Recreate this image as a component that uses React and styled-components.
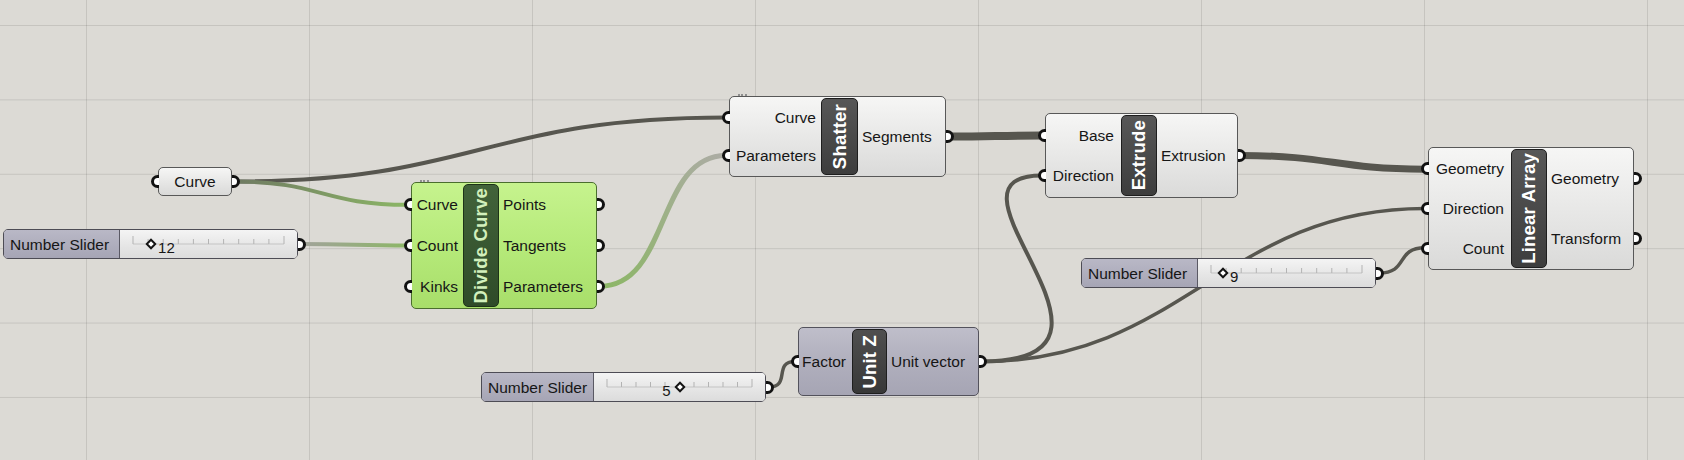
import React from "react";
import styled, { createGlobalStyle } from "styled-components";

const BORDER = 1.5;
const PAD = 1;

const GlobalStyle = createGlobalStyle`
  html, body {
    margin: 0;
    padding: 0;
    background: #dcdad5;
  }
  body {
    font-family: "Liberation Sans", Arial, sans-serif;
    overflow: hidden;
  }
`;

const tones = {
  grey: {
    fill: "linear-gradient(180deg, #f6f6f5 0%, #e8e8e7 50%, #dadad9 100%)",
    border: "#585858",
    bar: "linear-gradient(180deg, #575757 0%, #3d3d3d 100%)",
    barBorder: "#1e1e1e",
    barText: "#ffffff",
  },
  green: {
    fill: "linear-gradient(180deg, #c6f38e 0%, #b6ea7a 50%, #a8de6a 100%)",
    border: "#4a6e2e",
    bar: "linear-gradient(180deg, #42633a 0%, #2f4b29 100%)",
    barBorder: "#1d3318",
    barText: "#d2f0bc",
  },
  violet: {
    fill: "linear-gradient(180deg, #bfbeca 0%, #b0afbd 50%, #a6a5b4 100%)",
    border: "#53525c",
    bar: "linear-gradient(180deg, #4f4f4f 0%, #383838 100%)",
    barBorder: "#1e1e1e",
    barText: "#ffffff",
  },
};

const components = [
  { id: "divide", name: "Divide Curve", tone: "green", x: 411, y: 182, w: 186, h: 127, inW: 51, barW: 36, inPad: 5, inputs: ["Curve", "Count", "Kinks"], outputs: ["Points", "Tangents", "Parameters"], grip: true },
  { id: "shatter", name: "Shatter", tone: "grey", x: 729, y: 96, w: 217, h: 81, inW: 91, barW: 37, inPad: 5, inputs: ["Curve", "Parameters"], outputs: ["Segments"], grip: true },
  { id: "extrude", name: "Extrude", tone: "grey", x: 1045, y: 113, w: 193, h: 85, inW: 75, barW: 36, inPad: 7, inputs: ["Base", "Direction"], outputs: ["Extrusion"] },
  { id: "linarr", name: "Linear Array", tone: "grey", x: 1428, y: 147, w: 206, h: 123, inW: 82, barW: 36, inPad: 7, inputs: ["Geometry", "Direction", "Count"], outputs: ["Geometry", "Transform"] },
  { id: "unitz", name: "Unit Z", tone: "violet", x: 798, y: 327, w: 181, h: 69, inW: 53, barW: 35, inPad: 6, inputs: ["Factor"], outputs: ["Unit vector"] },
];

const params = [{ id: "curve", name: "Curve", x: 158, y: 167, w: 74, h: 29 }];

const sliders = [
  { id: "s12", x: 3, y: 229, w: 295, h: 30, labelW: 116, value: 12, t: 0.12, side: "right" },
  { id: "s9", x: 1081, y: 258, w: 295, h: 30, labelW: 116, value: 9, t: 0.08, side: "right" },
  { id: "s5", x: 481, y: 372, w: 285, h: 30, labelW: 112, value: 5, t: 0.5, side: "left" },
];

const byId = (id) => [...components, ...params, ...sliders].find((n) => n.id === id);

const portY = (node, i, n) =>
  node.y + BORDER + PAD + ((node.h - 2 * BORDER - 2 * PAD) * (i + 0.5)) / n;

const outPort = (id, i = 0) => {
  const node = byId(id);
  const n = node.outputs ? node.outputs.length : 1;
  return [node.x + node.w + 3, node.outputs ? portY(node, i, n) : node.y + node.h / 2];
};

const inPort = (id, i = 0) => {
  const node = byId(id);
  const n = node.inputs ? node.inputs.length : 1;
  return [node.x - 3, node.inputs ? portY(node, i, n) : node.y + node.h / 2];
};

const DARK = "#57564f";

const wires = [
  { from: outPort("curve"), to: inPort("shatter", 0), d: [240, 240], width: 4, colors: [DARK, DARK] },
  { from: outPort("curve"), to: inPort("divide", 0), d: [85, 85], width: 4, colors: ["#6f7a62", "#8cb666"] },
  { from: outPort("s12"), to: inPort("divide", 1), d: [50, 50], width: 4, colors: ["#a2a39b", "#8cb666"] },
  { from: outPort("divide", 2), to: inPort("shatter", 1), d: [70, 70], width: 5, colors: ["#8cb666", "#acaca4"] },
  { from: outPort("shatter"), to: inPort("extrude", 0), d: [45, 45], width: 8, colors: [DARK, DARK] },
  { from: outPort("extrude"), to: inPort("linarr", 0), d: [90, 90], width: 7, colors: [DARK, DARK] },
  { from: outPort("unitz"), to: inPort("extrude", 1), d: [180, 120], width: 4, colors: [DARK, DARK] },
  { from: outPort("unitz"), to: inPort("linarr", 1), d: [200, 200], width: 3.5, colors: [DARK, DARK] },
  { from: outPort("s9"), to: inPort("linarr", 2), d: [30, 30], width: 3.5, colors: [DARK, DARK] },
  { from: outPort("s5"), to: inPort("unitz", 0), d: [22, 22], width: 3.5, colors: [DARK, DARK] },
];

const Canvas = styled.div`
  position: relative;
  width: 1684px;
  height: 460px;
  overflow: hidden;
  background-color: #dcdad5;
  background-image:
    linear-gradient(to right, rgba(0, 0, 0, 0.1) 1px, transparent 1px),
    linear-gradient(to bottom, rgba(0, 0, 0, 0.1) 1px, transparent 1px);
  background-size: 223px 74.4px;
  background-position: 86px 25px;
`;

const WireLayer = styled.svg`
  position: absolute;
  left: 0;
  top: 0;
  z-index: 1;
  pointer-events: none;
`;

const Node = styled.div`
  position: absolute;
  left: ${(p) => p.$x}px;
  top: ${(p) => p.$y}px;
  width: ${(p) => p.$w}px;
  height: ${(p) => p.$h}px;
  box-sizing: border-box;
  display: flex;
  padding: ${PAD}px 0;
  border: ${BORDER}px solid ${(p) => p.$tone.border};
  border-radius: 5px;
  background: ${(p) => p.$tone.fill};
  color: #161616;
  font-size: 15.5px;
  z-index: 2;
`;

const Column = styled.div`
  display: flex;
  flex-direction: column;
  width: ${(p) => (p.$w ? `${p.$w}px` : "auto")};
  flex: ${(p) => (p.$w ? "none" : "1")};
`;

const Row = styled.div`
  position: relative;
  flex: 1;
  display: flex;
  align-items: center;
  justify-content: ${(p) => (p.$side === "in" ? "flex-end" : "flex-start")};
  padding: ${(p) => (p.$side === "in" ? `1px ${p.$pad}px 0 0` : `1px 0 0 ${p.$pad}px`)};
  white-space: nowrap;
`;

const Port = styled.span`
  position: absolute;
  top: 50%;
  ${(p) => (p.$side === "in" ? "left: -8.5px;" : "right: -8.5px;")}
  width: 8px;
  height: 13px;
  margin-top: -6.5px;
  box-sizing: border-box;
  background: #ffffff;
  border: 3px solid #121212;
  ${(p) =>
    p.$side === "in"
      ? "border-right: none; border-radius: 7px 0 0 7px;"
      : "border-left: none; border-radius: 0 7px 7px 0;"}
`;

const Bar = styled.div`
  width: ${(p) => p.$w}px;
  flex: none;
  box-sizing: border-box;
  display: flex;
  align-items: center;
  justify-content: center;
  border-radius: 5px;
  border: 1px solid ${(p) => p.$tone.barBorder};
  background: ${(p) => p.$tone.bar};
`;

const BarText = styled.span`
  writing-mode: vertical-rl;
  transform: rotate(180deg);
  font-weight: bold;
  font-size: 18.5px;
  letter-spacing: 0.2px;
  color: ${(p) => p.$color};
  white-space: nowrap;
`;

const Grip = styled.span`
  position: absolute;
  top: -3px;
  left: 8px;
  width: 9px;
  height: 3px;
  border-top: 2px dotted #8f8f8f;
`;

const ParamBox = styled.div`
  position: absolute;
  left: ${(p) => p.$x}px;
  top: ${(p) => p.$y}px;
  width: ${(p) => p.$w}px;
  height: ${(p) => p.$h}px;
  box-sizing: border-box;
  display: flex;
  align-items: center;
  justify-content: center;
  padding-top: 1px;
  border: ${BORDER}px solid #585858;
  border-radius: 5px;
  background: linear-gradient(180deg, #f6f6f5 0%, #e6e6e5 55%, #d9d9d8 100%);
  color: #161616;
  font-size: 15.5px;
  z-index: 2;
`;

const SliderBox = styled.div`
  position: absolute;
  left: ${(p) => p.$x}px;
  top: ${(p) => p.$y}px;
  width: ${(p) => p.$w}px;
  height: ${(p) => p.$h}px;
  box-sizing: border-box;
  display: flex;
  border: ${BORDER}px solid #4d4c55;
  border-radius: 5px;
  color: #161616;
  font-size: 15.5px;
  z-index: 2;
`;

const SliderLabel = styled.div`
  width: ${(p) => p.$w}px;
  flex: none;
  box-sizing: border-box;
  display: flex;
  align-items: center;
  padding: 1px 0 0 6px;
  border-right: 1.5px solid #5a5964;
  border-radius: 3.5px 0 0 3.5px;
  background: linear-gradient(180deg, #b9b8c6 0%, #a6a5b5 100%);
  white-space: nowrap;
`;

const SliderBody = styled.div`
  position: relative;
  flex: 1;
  padding: 0 13px;
  border-radius: 0 3.5px 3.5px 0;
  background: linear-gradient(180deg, #f4f4f4 0%, #e6e6e6 55%, #dcdcdc 100%);
`;

const Track = styled.div`
  position: relative;
  height: 100%;
`;

const Ticks = styled.svg`
  position: absolute;
  left: 0;
  top: 0;
  width: 100%;
  height: 100%;
  overflow: visible;
`;

const Knob = styled.span`
  position: absolute;
  top: 14px;
  width: 8px;
  height: 8px;
  box-sizing: border-box;
  background: #ffffff;
  border: 2px solid #141414;
  transform: translate(-50%, -50%) rotate(45deg);
`;

const Value = styled.span`
  position: absolute;
  top: 9px;
  line-height: 17px;
  font-size: 15px;
`;

function Component({ node }) {
  const tone = tones[node.tone];
  return (
    <Node $x={node.x} $y={node.y} $w={node.w} $h={node.h} $tone={tone}>
      {node.grip && <Grip />}
      <Column $w={node.inW}>
        {node.inputs.map((label) => (
          <Row key={label} $side="in" $pad={node.inPad}>
            <Port $side="in" />
            {label}
          </Row>
        ))}
      </Column>
      <Bar $w={node.barW} $tone={tone}>
        <BarText $color={tone.barText}>{node.name}</BarText>
      </Bar>
      <Column>
        {node.outputs.map((label) => (
          <Row key={label} $side="out" $pad={4}>
            {label}
            <Port $side="out" />
          </Row>
        ))}
      </Column>
    </Node>
  );
}

function Param({ node }) {
  return (
    <ParamBox $x={node.x} $y={node.y} $w={node.w} $h={node.h}>
      <Port $side="in" />
      {node.name}
      <Port $side="out" />
    </ParamBox>
  );
}

function NumberSlider({ node }) {
  const pct = `${node.t * 100}%`;
  return (
    <SliderBox $x={node.x} $y={node.y} $w={node.w} $h={node.h}>
      <SliderLabel $w={node.labelW}>Number Slider</SliderLabel>
      <SliderBody>
        <Track>
          <Ticks>
            <line x1="0" y1="14" x2="100%" y2="14" stroke="#c4c4c4" strokeWidth="1" />
            {Array.from({ length: 11 }, (_, i) => (
              <line
                key={i}
                x1={`${i * 10}%`}
                x2={`${i * 10}%`}
                y1={i === 0 || i === 10 ? 6 : 9}
                y2="14"
                stroke="#b3b3b3"
                strokeWidth="1"
              />
            ))}
          </Ticks>
          <Knob style={{ left: pct }} />
          {node.side === "right" ? (
            <Value style={{ left: `calc(${pct} + 7px)` }}>{node.value}</Value>
          ) : (
            <Value style={{ right: `calc(${100 - node.t * 100}% + 9px)` }}>{node.value}</Value>
          )}
        </Track>
      </SliderBody>
      <Port $side="out" />
    </SliderBox>
  );
}

function Wires() {
  return (
    <WireLayer width="1684" height="460" viewBox="0 0 1684 460">
      <defs>
        {wires.map((w, i) => (
          <linearGradient
            key={i}
            id={`wire-${i}`}
            gradientUnits="userSpaceOnUse"
            x1={w.from[0]}
            y1={w.from[1]}
            x2={w.to[0]}
            y2={w.to[1]}
          >
            <stop offset="0" stopColor={w.colors[0]} />
            <stop offset="1" stopColor={w.colors[1]} />
          </linearGradient>
        ))}
      </defs>
      {wires.map((w, i) => {
        const [x1, y1] = w.from;
        const [x2, y2] = w.to;
        const path = `M ${x1} ${y1} C ${x1 + w.d[0]} ${y1}, ${x2 - w.d[1]} ${y2}, ${x2} ${y2}`;
        return (
          <path
            key={i}
            d={path}
            fill="none"
            stroke={`url(#wire-${i})`}
            strokeWidth={w.width}
            strokeLinecap="round"
          />
        );
      })}
    </WireLayer>
  );
}

export default function App() {
  return (
    <>
      <GlobalStyle />
      <Canvas>
        <Wires />
        {params.map((p) => (
          <Param key={p.id} node={p} />
        ))}
        {sliders.map((s) => (
          <NumberSlider key={s.id} node={s} />
        ))}
        {components.map((c) => (
          <Component key={c.id} node={c} />
        ))}
      </Canvas>
    </>
  );
}
